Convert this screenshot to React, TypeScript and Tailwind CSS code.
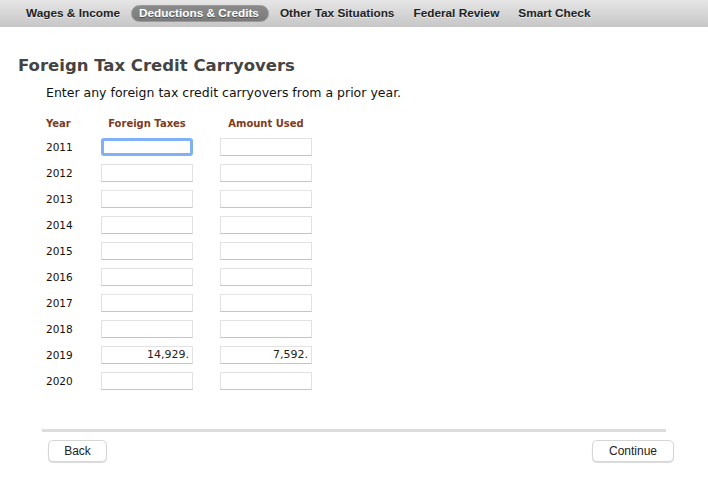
import React from "react";

const tabs = ["Wages & Income", "Deductions & Credits", "Other Tax Situations", "Federal Review", "Smart Check"];
const rows: { year: string; a: string; b: string }[] = [
  { year: "2011", a: "", b: "" },
  { year: "2012", a: "", b: "" },
  { year: "2013", a: "", b: "" },
  { year: "2014", a: "", b: "" },
  { year: "2015", a: "", b: "" },
  { year: "2016", a: "", b: "" },
  { year: "2017", a: "", b: "" },
  { year: "2018", a: "", b: "" },
  { year: "2019", a: "14,929.", b: "7,592." },
  { year: "2020", a: "", b: "" },
];

function Field({ value, focused }: { value: string; focused?: boolean }) {
  if (focused) {
    return (
      <div className="h-[18px] w-[92px] rounded-[3px] border-[3px] border-[#80b0f6] bg-white" />
    );
  }
  return (
    <div className="h-[18px] w-[92px] border border-[#e2e2e2] border-b-[#c4c4c4] bg-white px-[3px] text-right text-[11px] leading-[16px] text-[#222]">
      {value}
    </div>
  );
}

export default function App() {
  return (
    <div className="h-[478px] w-[708px] bg-white" style={{ fontFamily: '"DejaVu Sans", Verdana, sans-serif' }}>
      <div
        className="flex h-[27px] items-center gap-[3px] bg-gradient-to-b from-[#e6e6e6] to-[#c6c6c6] pl-[18px] text-[11.8px] font-bold text-[#222]"
        style={{ fontFamily: '"Liberation Sans", Arial, sans-serif' }}
      >
        {tabs.map((t, i) =>
          i === 1 ? (
            <span
              key={t}
              className="rounded-full border border-[#9a9a9a] bg-gradient-to-b from-[#8a8a8a] to-[#7a7a7a] pl-[7px] pr-[9px] py-[0px] leading-[15px] text-white [text-shadow:0_1px_0_rgba(0,0,0,0.4)]"
            >
              {t}
            </span>
          ) : (
            <span key={t} className="px-[8px] [text-shadow:0_1px_0_rgba(255,255,255,0.6)]">
              {t}
            </span>
          )
        )}
      </div>

      <div className="pl-[18px] pt-[29px]">
        <h1 className="text-[16.5px] font-bold leading-[20px] text-[#444]">Foreign Tax Credit Carryovers</h1>
        <p className="mt-[9px] pl-[28px] text-[12.5px] leading-[16px] text-[#111]">
          Enter any foreign tax credit carryovers from a prior year.
        </p>

        <div className="mt-[16px] pl-[28px]">
          <div className="grid grid-cols-[55px_92px_27px_92px] text-[10px] font-bold leading-[14px] text-[#7d3b1a]">
            <span>Year</span>
            <span className="text-center">Foreign Taxes</span>
            <span />
            <span className="text-center">Amount Used</span>
          </div>
          <div className="mt-[7px] flex flex-col gap-[8px]">
            {rows.map((r, i) => (
              <div key={r.year} className="grid grid-cols-[55px_92px_27px_92px] items-center">
                <span className="text-[10.5px] leading-[18px] text-[#111]">{r.year}</span>
                <Field value={r.a} focused={i === 0} />
                <span />
                <Field value={r.b} />
              </div>
            ))}
          </div>
        </div>
      </div>

      <div className="mx-[42px] mt-[39px] h-[3px] bg-[#dddddd]" />
      <div
        className="mt-[8px] flex justify-between pl-[48px] pr-[34px] text-[12px] text-[#222]"
        style={{ fontFamily: '"Liberation Sans", Arial, sans-serif' }}
      >
        <button className="h-[22px] w-[59px] rounded-[5px] border border-[#d6d6d6] bg-white shadow-[0_1px_1px_rgba(0,0,0,0.15)]">Back</button>
        <button className="h-[22px] w-[82px] rounded-[5px] border border-[#d6d6d6] bg-white shadow-[0_1px_1px_rgba(0,0,0,0.15)]">Continue</button>
      </div>
    </div>
  );
}
